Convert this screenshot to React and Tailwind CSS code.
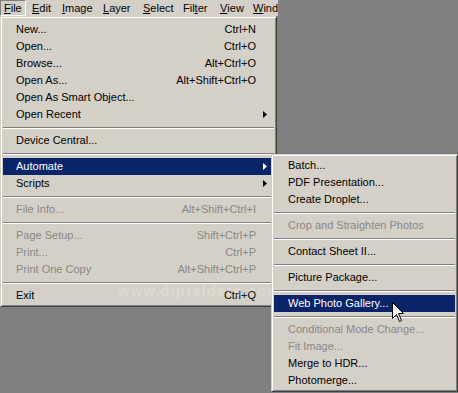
// App.jsx
// Classic Windows-style Photoshop File menu with the Automate submenu open

const FONT = "font-['Liberation_Sans',Arial,sans-serif]";

const fileItems = [
  { label: 'New...', sc: 'Ctrl+N' },
  { label: 'Open...', sc: 'Ctrl+O' },
  { label: 'Browse...', sc: 'Alt+Ctrl+O' },
  { label: 'Open As...', sc: 'Alt+Shift+Ctrl+O' },
  { label: 'Open As Smart Object...' },
  { label: 'Open Recent', sub: true },
  'sep',
  { label: 'Device Central...' },
  'sep',
  { label: 'Automate', sub: true, active: true },
  { label: 'Scripts', sub: true },
  'sep',
  { label: 'File Info...', sc: 'Alt+Shift+Ctrl+I', disabled: true },
  'sep',
  { label: 'Page Setup...', sc: 'Shift+Ctrl+P', disabled: true },
  { label: 'Print...', sc: 'Ctrl+P', disabled: true },
  { label: 'Print One Copy', sc: 'Alt+Shift+Ctrl+P', disabled: true },
  'sep',
  { label: 'Exit', sc: 'Ctrl+Q' },
];

const automateItems = [
  { label: 'Batch...' },
  { label: 'PDF Presentation...' },
  { label: 'Create Droplet...' },
  'sep',
  { label: 'Crop and Straighten Photos', disabled: true },
  'sep',
  { label: 'Contact Sheet II...' },
  'sep',
  { label: 'Picture Package...' },
  'sep',
  { label: 'Web Photo Gallery...', active: true },
  'sep',
  { label: 'Conditional Mode Change...', disabled: true },
  { label: 'Fit Image...', disabled: true },
  { label: 'Merge to HDR...' },
  { label: 'Photomerge...' },
];

// name, mnemonic index, box width class
const barItems = [
  ['File', 0, 'w-[26px]'],
  ['Edit', 0, 'w-[30px]'],
  ['Image', 0, 'w-[41px]'],
  ['Layer', 0, 'w-[40px]'],
  ['Select', 0, 'w-[40px]'],
  ['Filter', 3, 'w-[37px]'],
  ['View', 0, 'w-[33px]'],
  ['Wind', 0, 'w-[40px]'],
];

function Arrow({ white }) {
  return (
    <svg width="4" height="7" viewBox="0 0 4 7" className="shrink-0">
      <polygon points="0,0 4,3.5 0,7" fill={white ? '#ffffff' : '#000000'} />
    </svg>
  );
}

function Separator() {
  return (
    <div className="h-[9px] flex flex-col justify-center">
      <div className="h-px bg-[#808080]" />
      <div className="h-px bg-white" />
    </div>
  );
}

function MenuRow({ item, padLeft }) {
  const color = item.active
    ? 'bg-[#0a246a] text-white'
    : item.disabled
      ? 'text-[#8a8884]'
      : 'text-black';
  return (
    <div className={`h-[17px] flex items-center pr-[7px] ${padLeft} ${color}`}>
      <span className="flex-1 whitespace-nowrap">{item.label}</span>
      {item.sc && <span className="whitespace-nowrap mr-[11px]">{item.sc}</span>}
      {item.sub && <Arrow white={item.active} />}
    </div>
  );
}

function Menu({ items, className, padLeft }) {
  return (
    <div
      className={`bg-[#d4d0c8] border border-t-[#d4d0c8] border-l-[#d4d0c8] border-r-[#404040] border-b-[#404040] shadow-[inset_1px_1px_#ffffff,inset_-1px_-1px_#808080] p-[2px] ${className}`}
    >
      {items.map((item, i) =>
        item === 'sep' ? <Separator key={i} /> : <MenuRow key={i} item={item} padLeft={padLeft} />
      )}
    </div>
  );
}

function MenuBar() {
  return (
    <div className="w-[278px] h-[16px] bg-[#d4d0c8] flex items-center text-black overflow-hidden">
      {barItems.map(([name, u, w], i) => (
        <div
          key={name}
          className={`h-full shrink-0 flex items-center whitespace-nowrap ${w} ${
            i === 0 ? 'border border-t-[#808080] border-l-[#808080] border-r-white border-b-white pl-[3px]' : 'pl-[6px]'
          }`}
        >
          {name.slice(0, u)}
          <u className="underline-offset-[1px]">{name[u]}</u>
          {name.slice(u + 1)}
        </div>
      ))}
    </div>
  );
}

function Cursor() {
  return (
    <svg
      width="13"
      height="21"
      viewBox="0 0 13 21"
      className="absolute left-[392px] top-[302px] pointer-events-none"
    >
      <path
        d="M0.5 0.5 L0.5 16.5 L4.5 12.5 L7.5 19.5 L9.5 18.5 L6.5 11.5 L11.5 11.5 Z"
        fill="#ffffff"
        stroke="#000000"
        strokeWidth="1"
      />
    </svg>
  );
}

export default function App() {
  return (
    <div className={`relative w-[458px] h-[393px] bg-[#808080] overflow-hidden text-[11px] leading-none ${FONT}`}>
      <MenuBar />
      <Menu items={fileItems} className="w-[277px] pt-[4px]" padLeft="pl-[13px]" />

      {/* watermark */}
      <div className="absolute left-[118px] top-[283px] text-[15px] font-bold text-white/20 whitespace-nowrap pointer-events-none tracking-[1px]">
        www.dijitalders.com
      </div>

      <Menu
        items={automateItems}
        className="absolute left-[271px] top-[154px] w-[187px]"
        padLeft="pl-[14px]"
      />

      <Cursor />
    </div>
  );
}
